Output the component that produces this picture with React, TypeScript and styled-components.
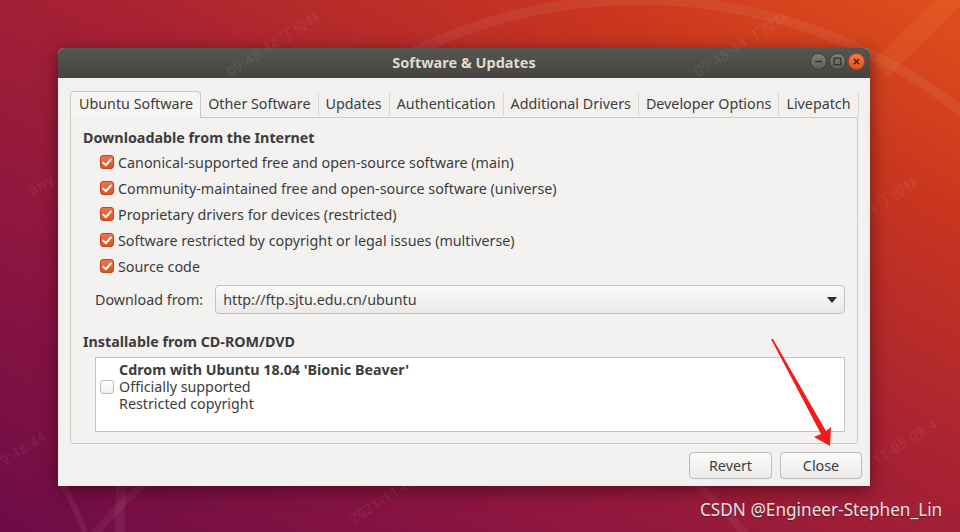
import React from "react";
import styled, { createGlobalStyle } from "styled-components";

const Global = createGlobalStyle`
  html, body { margin: 0; padding: 0; }
  body { width: 960px; height: 532px; overflow: hidden; font-family: "Noto Sans", "Liberation Sans", sans-serif; }
  #root { width: 960px; height: 532px; }
`;

const Desktop = styled.div`
  position: relative;
  width: 960px;
  height: 532px;
  box-sizing: border-box;
  padding: 48px 0 0 58px;
  overflow: hidden;
  background: linear-gradient(to top right, #6d0c47 0%, #8f1640 30%, #a82233 55%, #c9361f 80%, #e0501c 100%);
`;

const Decor = styled.svg`
  position: absolute;
  left: 0;
  top: 0;
  pointer-events: none;
`;

const Window = styled.div`
  position: relative;
  width: 812px;
  height: 438px;
  display: flex;
  flex-direction: column;
  border-radius: 6px 6px 0 0;
  overflow: hidden;
  background: #f2f1f0;
  box-shadow: 0 4px 18px rgba(40, 0, 10, 0.55);
`;

const TitleBar = styled.div`
  height: 30px;
  flex: none;
  display: flex;
  align-items: center;
  justify-content: center;
  position: relative;
  background: linear-gradient(#57554f, #46443f);
  color: #dfdbd2;
  font-weight: 700;
  font-size: 14.5px;
  padding-bottom: 3px;
  box-sizing: border-box;
`;

const WinButtons = styled.div`
  position: absolute;
  right: 5px;
  top: 5px;
  display: flex;
  gap: 2px;
`;

const WinBtn = styled.div<{ $close?: boolean }>`
  width: 17px;
  height: 17px;
  border-radius: 50%;
  box-sizing: border-box;
  border: 1px solid ${(p) => (p.$close ? "#b8431a" : "#3e3d39")};
  background: ${(p) =>
    p.$close ? "linear-gradient(#f27a4c, #e2521f)" : "linear-gradient(#817f7a, #5f5d58)"};
  display: flex;
  align-items: center;
  justify-content: center;
`;

const Body = styled.div`
  flex: 1;
  min-height: 0;
  display: flex;
  flex-direction: column;
  padding: 13px 12px 7px 12px;
  color: #3c3c3c;
  font-size: 14.3px;
`;

const TabRow = styled.div`
  display: flex;
  height: 26px;
  flex: none;
  align-items: stretch;
`;

const Tab = styled.div<{ $active?: boolean }>`
  display: flex;
  align-items: center;
  padding: 0 7px 4px 7px;
  white-space: nowrap;
  color: #3c3c3c;
  box-sizing: border-box;
  ${(p) =>
    p.$active
      ? `border: 1px solid #cdc7c2; border-bottom: none; border-radius: 4px 4px 0 0; background: #f6f5f4; margin-bottom: -1px; z-index: 1; padding-left: 8px;`
      : `border-right: 1px solid #dcd9d5; margin: 2px 0 1px 0; padding-bottom: 2px;`}
`;

const Panel = styled.div`
  flex: 1;
  min-height: 0;
  border: 1px solid #cdc7c2;
  border-radius: 0 0 4px 4px;
  background: #f3f2f1;
  padding: 10px 12px 10px 12px;
  display: flex;
  flex-direction: column;
`;

const Heading = styled.div<{ $mt?: number }>`
  font-weight: 700;
  height: 20px;
  line-height: 20px;
  margin-top: ${(p) => p.$mt ?? 0}px;
  color: #3c3c3c;
`;

const CheckList = styled.div`
  display: flex;
  flex-direction: column;
  padding-left: 17px;
  margin-top: 1px;
`;

const CheckRow = styled.div`
  display: flex;
  align-items: center;
  height: 26px;
  gap: 4px;
`;

const Box = styled.span<{ $checked?: boolean }>`
  width: 14px;
  height: 14px;
  flex: none;
  box-sizing: border-box;
  border-radius: 3px;
  display: inline-flex;
  align-items: center;
  justify-content: center;
  border: 1px solid ${(p) => (p.$checked ? "#c2461a" : "#bdb9b4")};
  background: ${(p) => (p.$checked ? "linear-gradient(#ef7448, #dc5424)" : "linear-gradient(#ffffff, #f2f1f0)")};
`;

const SourceRow = styled.div`
  display: flex;
  align-items: center;
  margin-top: 6px;
  padding-left: 12px;
  gap: 12px;
`;

const Combo = styled.div`
  flex: 1;
  height: 29px;
  box-sizing: border-box;
  border: 1px solid #c3bfbb;
  border-radius: 4px;
  background: linear-gradient(#fafaf9, #eceae8);
  display: flex;
  align-items: center;
  justify-content: space-between;
  padding: 0 7px 0 7px;
  color: #3c3c3c;
`;

const CdList = styled.div`
  margin: 5px 0 0 12px;
  height: 75px;
  flex: none;
  box-sizing: border-box;
  border: 1px solid #c6c2be;
  background: #ffffff;
  padding: 3px 0 0 4px;
`;

const CdEntry = styled.div`
  display: flex;
  align-items: center;
  gap: 5px;
`;

const CdText = styled.div`
  display: flex;
  flex-direction: column;
  line-height: 17px;
`;

const Strong = styled.span`
  font-weight: 700;
`;

const Footer = styled.div`
  display: flex;
  flex: none;
  justify-content: flex-end;
  gap: 8px;
  margin-top: 8px;
  margin-right: -4px;
`;

const Button = styled.div<{ $w: number }>`
  width: ${(p) => p.$w}px;
  height: 27px;
  box-sizing: border-box;
  border: 1px solid #bfbab5;
  border-radius: 4px;
  background: linear-gradient(#fbfbfa, #eceae8);
  display: flex;
  align-items: center;
  justify-content: center;
  color: #3c3c3c;
`;

const Credit = styled.div`
  position: absolute;
  left: 700px;
  top: 498px;
  font-size: 17.2px;
  color: #e6e2e2;
  text-shadow: 0 1px 1px rgba(0, 0, 0, 0.35);
  white-space: nowrap;
`;

const Mark = styled.div`
  position: absolute;
  font-family: "Noto Sans", "Noto Sans CJK SC", sans-serif;
  font-size: 15px;
  font-weight: 700;
  color: rgba(255, 255, 255, 0.06);
  white-space: nowrap;
  transform: rotate(-32deg);
  transform-origin: left bottom;
  pointer-events: none;
`;

const marks = [
  { x: 232, y: 60, t: "09:48:44 丁俊林" },
  { x: 700, y: 60, t: "09:48:44 丁俊林" },
  { x: 830, y: 225, t: "09:48:44 丁俊林" },
  { x: 6, y: 450, t: "9:48:44" },
  { x: 34, y: 180, t: "any" },
  { x: 355, y: 508, t: "2021-11-05" },
  { x: 845, y: 470, t: "2021-11-05 09:4" },
];

const tabs = [
  "Ubuntu Software",
  "Other Software",
  "Updates",
  "Authentication",
  "Additional Drivers",
  "Developer Options",
  "Livepatch",
];

const sources = [
  "Canonical-supported free and open-source software (main)",
  "Community-maintained free and open-source software (universe)",
  "Proprietary drivers for devices (restricted)",
  "Software restricted by copyright or legal issues (multiverse)",
  "Source code",
];

const Check = () => (
  <svg width="10" height="9" viewBox="0 0 10 9">
    <path d="M1.2 4.6 L3.9 7.2 L8.8 1.6" fill="none" stroke="#fff" strokeWidth="2" strokeLinecap="round" strokeLinejoin="round" />
  </svg>
);

export default function App() {
  return (
    <Desktop>
      <Global />
      <Decor width="960" height="532" viewBox="0 0 960 532">
        <circle cx="640" cy="520" r="520" fill="none" stroke="rgba(255,255,255,0.06)" strokeWidth="10" />
        <circle cx="420" cy="800" r="420" fill="none" stroke="rgba(255,255,255,0.05)" strokeWidth="8" />
        <path d="M880 70 L960 -10" stroke="rgba(255,150,80,0.12)" strokeWidth="22" />
        <path d="M60 480 Q75 505 85 532" stroke="rgba(255,255,255,0.06)" strokeWidth="6" fill="none" />
      </Decor>
      <Window>
        <TitleBar>
          Software &amp; Updates
          <WinButtons>
            <WinBtn>
              <svg width="9" height="9" viewBox="0 0 9 9">
                <path d="M1 4.5 H8" stroke="#34332f" strokeWidth="1.4" />
              </svg>
            </WinBtn>
            <WinBtn>
              <svg width="9" height="9" viewBox="0 0 9 9">
                <rect x="1.2" y="1.2" width="6.6" height="6.6" fill="none" stroke="#34332f" strokeWidth="1.3" />
              </svg>
            </WinBtn>
            <WinBtn $close>
              <svg width="9" height="9" viewBox="0 0 9 9">
                <path d="M2 2 L7 7 M7 2 L2 7" stroke="#4a1a08" strokeWidth="1.4" />
              </svg>
            </WinBtn>
          </WinButtons>
        </TitleBar>
        <Body>
          <TabRow>
            {tabs.map((t, i) => (
              <Tab key={t} $active={i === 0}>
                {t}
              </Tab>
            ))}
          </TabRow>
          <Panel>
            <Heading>Downloadable from the Internet</Heading>
            <CheckList>
              {sources.map((s) => (
                <CheckRow key={s}>
                  <Box $checked>
                    <Check />
                  </Box>
                  {s}
                </CheckRow>
              ))}
            </CheckList>
            <SourceRow>
              <span>Download from:</span>
              <Combo>
                <span>http://ftp.sjtu.edu.cn/ubuntu</span>
                <svg width="10" height="6" viewBox="0 0 10 6">
                  <path d="M0 0 H10 L5 6 Z" fill="#2e2e2e" />
                </svg>
              </Combo>
            </SourceRow>
            <Heading $mt={18}>Installable from CD-ROM/DVD</Heading>
            <CdList>
              <CdEntry>
                <Box />
                <CdText>
                  <Strong>Cdrom with Ubuntu 18.04 'Bionic Beaver'</Strong>
                  <span>Officially supported</span>
                  <span>Restricted copyright</span>
                </CdText>
              </CdEntry>
            </CdList>
          </Panel>
          <Footer>
            <Button $w={83}>Revert</Button>
            <Button $w={82}>Close</Button>
          </Footer>
        </Body>
      </Window>
      {marks.map((m, i) => (
        <Mark key={i} style={{ left: m.x, top: m.y }}>
          {m.t}
        </Mark>
      ))}
      <Decor width="960" height="532" viewBox="0 0 960 532">
        <polygon points="771,339 773,339 826,431 831,427 830,446 814,437 821,434" fill="#f21c1c" />
      </Decor>
      <Credit>CSDN @Engineer-Stephen_Lin</Credit>
    </Desktop>
  );
}
